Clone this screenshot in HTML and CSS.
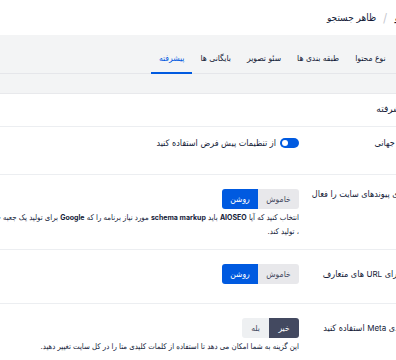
FILE: index.html
```html
<!DOCTYPE html>
<html lang="fa">
<head>
<meta charset="utf-8">
<title>تنظیمات پیشرفته</title>
<link rel="stylesheet" href="styles.css">
</head>
<body>
<div class="page">
  <header class="topbar">
    <nav class="crumbs">
      <span class="crumb-root">سئو</span>
      <span class="crumb-sep">/</span>
      <span class="crumb">ظاهر جستجو</span>
    </nav>
  </header>

  <div class="band">
    <ul class="tabs">
      <li class="tab">سراسری</li>
      <li class="tab">نوع محتوا</li>
      <li class="tab">طبقه بندی ها</li>
      <li class="tab">سئو تصویر</li>
      <li class="tab">بایگانی ها</li>
      <li class="tab tab--active">پیشرفته</li>
    </ul>
  </div>

  <section class="card">
    <div class="card-head">تنظیمات پیشرفته</div>

    <div class="row row--toggle">
      <div class="label">متا ربات های جهانی</div>
      <div class="control">
        <label class="toggle-line">
          <span class="toggle"><span class="knob"></span></span>
          <span class="toggle-text">از تنظیمات پیش فرض استفاده کنید</span>
        </label>
      </div>
    </div>

    <div class="row">
      <div class="label label--high">جعبه جستجوی پیوندهای سایت را فعال<br>کنید</div>
      <div class="control">
        <div class="btn-group">
          <span class="btn btn--off">خاموش</span>
          <span class="btn btn--on">روشن</span>
        </div>
        <p class="desc">انتخاب کنید که آیا <b>AIOSEO</b> باید <b>schema markup</b> مورد نیاز برنامه را که <b>Google</b> برای تولید یک جعبه جستجو در نتایج نیاز دارد<br>، تولید کند.</p>
      </div>
    </div>

    <div class="row row--plain">
      <div class="label">صفحه بندی برای <span class="latin">URL</span> های متعارف</div>
      <div class="control">
        <div class="btn-group">
          <span class="btn btn--off">خاموش</span>
          <span class="btn btn--on">روشن</span>
        </div>
      </div>
    </div>

    <div class="row">
      <div class="label">از کلمات کلیدی <span class="latin">Meta</span> استفاده کنید</div>
      <div class="control">
        <div class="btn-group">
          <span class="btn btn--no">خیر</span>
          <span class="btn btn--yes">بله</span>
        </div>
        <p class="desc">این گزینه به شما امکان می دهد تا استفاده از کلمات کلیدی متا را در کل سایت تغییر دهید.</p>
      </div>
    </div>
  </section>
</div>
</body>
</html>
```

FILE: styles.css
```css
html, body {
  margin: 0;
  padding: 0;
  background: #ffffff;
}

body {
  overflow: hidden;
  width: 396px;
  height: 360px;
  font-family: "DejaVu Sans Condensed", "DejaVu Sans", sans-serif;
  font-stretch: condensed;
  color: #141b38;
}

.page {
  direction: rtl;
  width: 590px;
  margin-left: -120px;
}

/* ---------- top bar ---------- */
.topbar {
  height: 35px;
  display: flex;
  align-items: center;
  padding-right: 57px;
  background: #ffffff;
}

.crumbs {
  display: flex;
  align-items: center;
  font-size: 10px;
  line-height: 16px;
}

.crumb-root {
  font-weight: 700;
  color: #141b38;
}

.crumb-sep {
  margin: 0 8px 0 7px;
  color: #c4c6ce;
  font-size: 12px;
}

.crumb {
  color: #141b38;
}

/* ---------- tabs ---------- */
.band {
  background: #f3f4f5;
  padding-top: 15px;
  padding-bottom: 19px;
}

.tabs {
  list-style: none;
  margin: 0;
  padding: 0 31px 0 0;
  display: flex;
  border-bottom: 1px solid #e5e6ea;
}

.tab {
  padding: 0 8px 6px;
  font-size: 8.5px;
  line-height: 16px;
  color: #141b38;
  border-bottom: 2px solid transparent;
  margin-bottom: -1px;
  white-space: nowrap;
}

.tab--active {
  color: #005ae0;
  border-bottom-color: #005ae0;
}

/* ---------- card ---------- */
.card {
  background: #ffffff;
  border-top: 1px solid #e8e9ec;
  padding-right: 29px;
}

.card-head {
  padding: 7px 0 9px;
  font-size: 10px;
  line-height: 16px;
  border-bottom: 1px solid #eceef1;
}

.row {
  display: flex;
  gap: 12px;
  padding: 14px 0 10px;
  border-bottom: 1px solid #eceef1;
}

.row--toggle {
  padding: 6px 0 21px;
}

.row--plain {
  padding-bottom: 19px;
}

.label {
  flex: 0 0 130px;
  min-width: 0;
  font-size: 9px;
  line-height: 20px;
  white-space: nowrap;
}

.label--high {
  margin-top: -3px;
  line-height: 16px;
}

.latin {
  font-family: Inter, sans-serif;
  font-size: 8px;
  line-height: 1;
}

.control {
  flex: 1;
  min-width: 0;
}

/* toggle */
.toggle-line {
  display: flex;
  align-items: center;
  gap: 4px;
  height: 20px;
}

.toggle {
  width: 19px;
  height: 10px;
  border-radius: 5px;
  background: #005ae0;
  display: flex;
  align-items: center;
  justify-content: flex-end;
  padding: 0 2px;
  box-sizing: border-box;
}

.knob {
  width: 6px;
  height: 6px;
  border-radius: 50%;
  background: #ffffff;
}

.toggle-text {
  font-size: 9px;
  color: #141b38;
}

/* button group */
.btn-group {
  display: flex;
  width: max-content;
  height: 20px;
  border-radius: 3px;
  overflow: hidden;
}

.btn {
  display: flex;
  align-items: center;
  justify-content: center;
  font-size: 8.5px;
  color: #434960;
}

.btn--off {
  width: 41px;
  background: #e8e8eb;
}

.btn--on {
  width: 36px;
  background: #005ae0;
  color: #ffffff;
}

.btn--no {
  width: 30px;
  background: #434960;
  color: #ffffff;
}

.btn--yes {
  width: 27px;
  background: #eef0f2;
}

.desc {
  margin: 2px 0 0;
  font-size: 7.75px;
  line-height: 14px;
  color: #141b38;
  white-space: nowrap;
}

.desc b {
  font-family: Inter, sans-serif;
  font-size: 7px;
  font-weight: 700;
  line-height: 1;
}
```
